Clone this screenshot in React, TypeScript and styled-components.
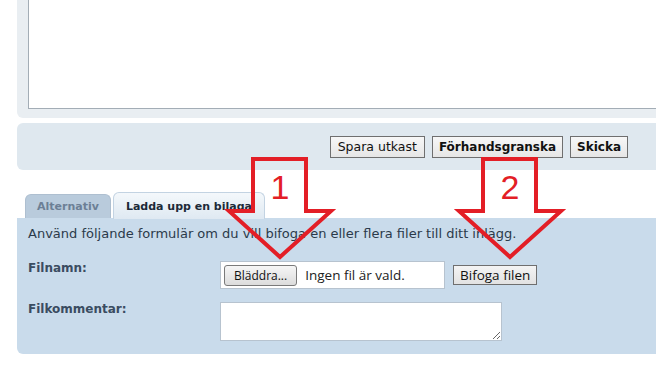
import React from "react";
import styled, { createGlobalStyle } from "styled-components";

const Global = createGlobalStyle`
  html, body { margin: 0; padding: 0; background: #ffffff; overflow: hidden; }
  body { font-family: "DejaVu Sans", Verdana, sans-serif; }
`;

const Page = styled.div`
  position: relative;
  width: 656px;
  height: 372px;
  overflow: hidden;
  padding-left: 17px;
  box-sizing: border-box;
`;

const EditorPanel = styled.div`
  width: 660px;
  background: #e9eef2;
  padding: 0 0 9px 11px;
  border-bottom-left-radius: 6px;
`;

const EditorArea = styled.div`
  height: 108px;
  background: #ffffff;
  border-left: 1px solid #a3adb6;
  border-bottom: 1px solid #a3adb6;
`;

const ActionBar = styled.div`
  margin-top: 5px;
  width: 639px;
  height: 47px;
  background: #dfe8ef;
  border-radius: 6px 0 0 6px;
  display: flex;
  align-items: center;
  justify-content: flex-end;
  gap: 7px;
  padding-right: 28px;
  box-sizing: border-box;
`;

const FormButton = styled.button<{ $bold?: boolean }>`
  height: 22px;
  padding: 0 ${(p) => (p.$bold ? 6 : 7)}px;
  font-family: "DejaVu Sans", Verdana, sans-serif;
  font-size: ${(p) => (p.$bold ? 12 : 12.5)}px;
  font-weight: ${(p) => (p.$bold ? 700 : 400)};
  color: #111;
  background: linear-gradient(#f7f7f7, #e6e6e6);
  border: 1px solid #6f6f6f;
  border-radius: 0;
`;

const Tabs = styled.div`
  margin-top: 21px;
  margin-left: 8px;
  display: flex;
  align-items: flex-end;
  gap: 2px;
  height: 27px;
`;

const Tab = styled.div<{ $active?: boolean }>`
  height: ${(p) => (p.$active ? 27 : 24)}px;
  box-sizing: border-box;
  padding: 0 ${(p) => (p.$active ? 12 : 11)}px;
  display: flex;
  align-items: center;
  font-size: 11px;
  font-weight: 700;
  border-radius: 6px 6px 0 0;
  color: ${(p) => (p.$active ? "#1d2a38" : "#6c7f95")};
  background: ${(p) =>
    p.$active ? "linear-gradient(#f4f8fb, #dfe9f2)" : "#b9cbdc"};
  border: 1px solid ${(p) => (p.$active ? "#c3d3e2" : "#aebfd0")};
  border-bottom: none;
  margin-bottom: ${(p) => (p.$active ? -1 : 0)}px;
  position: relative;
`;

const UploadPanel = styled.div`
  width: 639px;
  height: 136px;
  box-sizing: border-box;
  background: #c9dbeb;
  border-radius: 0 0 0 6px;
  padding: 7px 11px 13px;
`;

const Intro = styled.p`
  margin: 0 0 18px;
  font-size: 13px;
  line-height: 18px;
  color: #2b3a4a;
  white-space: nowrap;
`;

const FieldGrid = styled.div`
  display: grid;
  grid-template-columns: 192px auto;
  row-gap: 13px;
  align-items: start;
`;

const Label = styled.div`
  font-size: 12px;
  line-height: 14px;
  font-weight: 700;
  color: #3a4c61;
`;

const FileRow = styled.div`
  display: flex;
  align-items: center;
  gap: 8px;
`;

const FileBox = styled.div`
  width: 225px;
  height: 28px;
  box-sizing: border-box;
  background: #ffffff;
  border: 1px solid #b7c3cf;
  display: flex;
  align-items: center;
  padding-left: 3px;
  gap: 8px;
  font-family: "Open Sans", "Noto Sans", sans-serif;
  font-size: 13.5px;
  color: #222;
`;

const BrowseButton = styled.button`
  height: 21px;
  padding: 0 9px;
  font-family: "Open Sans", "Noto Sans", sans-serif;
  font-size: 12px;
  color: #111;
  background: linear-gradient(#f6f6f6, #dcdcdc);
  border: 1px solid #7a7a7a;
  border-radius: 3px;
`;

const AttachButton = styled.button`
  height: 20px;
  padding: 0 6px;
  font-family: "Open Sans", "Noto Sans", sans-serif;
  font-size: 13.5px;
  line-height: 18px;
  color: #111;
  background: linear-gradient(#f4f4f4, #e2e2e2);
  border: 1px solid #6f6f6f;
  border-radius: 0;
`;

const Comment = styled.textarea`
  width: 282px;
  height: 39px;
  box-sizing: border-box;
  border: 1px solid #b7c3cf;
  background: #ffffff;
  resize: both;
  padding: 0;
  display: block;
`;

const Annotations = styled.svg`
  position: absolute;
  left: 0;
  top: 0;
  pointer-events: none;
`;

const Arrow = ({ x, n }: { x: number; n: string }) => (
  <g>
    <polygon
      points={`${x + 2},159 ${x + 55},159 ${x + 55},211 ${x + 80},211 ${x + 29},257 ${x - 22},211 ${x + 2},211`}
      fill="none"
      stroke="#e31e26"
      strokeWidth={4}
      strokeLinejoin="miter"
    />
    <text
      x={x + 29}
      y={199}
      textAnchor="middle"
      fontFamily="'Liberation Sans', Arial, sans-serif"
      fontSize={34}
      fill="#e31e26"
    >
      {n}
    </text>
  </g>
);

export default function App() {
  return (
    <Page>
      <Global />
      <EditorPanel>
        <EditorArea />
      </EditorPanel>
      <ActionBar>
        <FormButton>Spara utkast</FormButton>
        <FormButton $bold>Förhandsgranska</FormButton>
        <FormButton $bold>Skicka</FormButton>
      </ActionBar>
      <Tabs>
        <Tab>Alternativ</Tab>
        <Tab $active>Ladda upp en bilaga</Tab>
      </Tabs>
      <UploadPanel>
        <Intro>
          Använd följande formulär om du vill bifoga en eller flera filer till ditt inlägg.
        </Intro>
        <FieldGrid>
          <Label>Filnamn:</Label>
          <FileRow>
            <FileBox>
              <BrowseButton>Bläddra...</BrowseButton>
              <span>Ingen fil är vald.</span>
            </FileBox>
            <AttachButton>Bifoga filen</AttachButton>
          </FileRow>
          <Label>Filkommentar:</Label>
          <Comment />
        </FieldGrid>
      </UploadPanel>
      <Annotations width={656} height={372}>
        <Arrow x={251} n="1" />
        <Arrow x={481} n="2" />
      </Annotations>
    </Page>
  );
}
